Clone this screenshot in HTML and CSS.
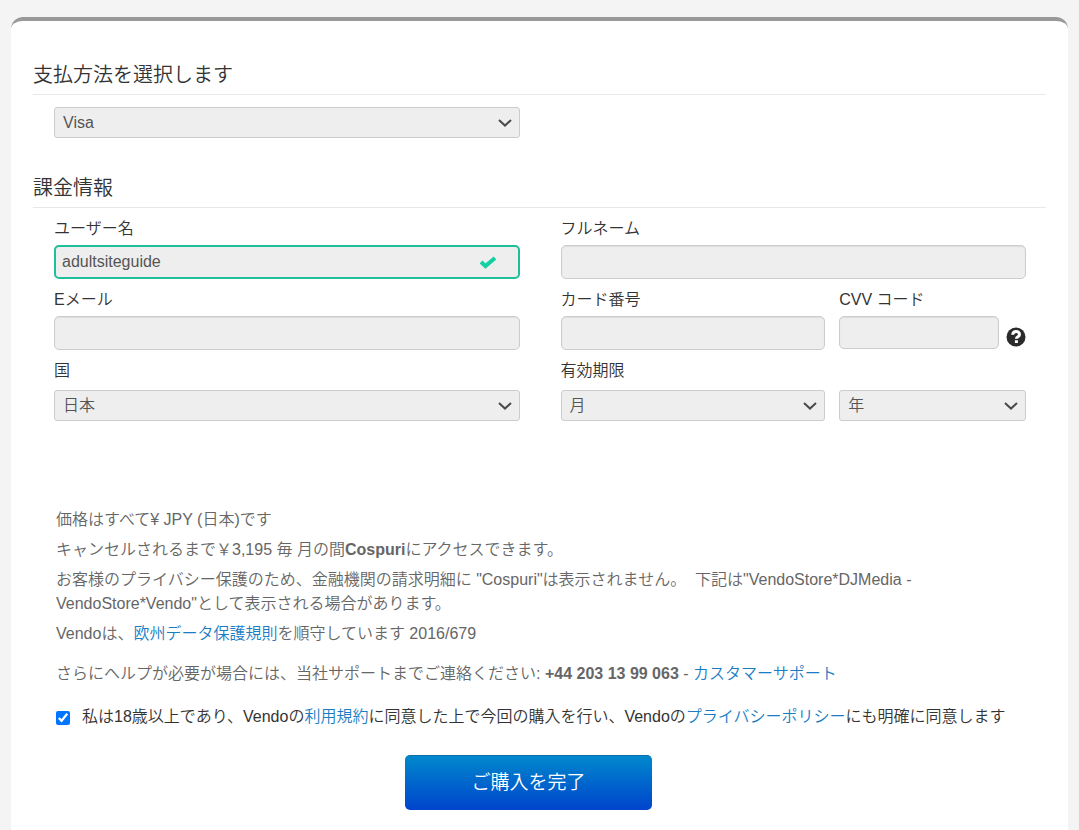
FILE: index.html
```html
<!DOCTYPE html>
<html lang="ja">
<head>
<meta charset="utf-8">
<meta name="viewport" content="width=device-width, initial-scale=1">
<title>お支払い</title>
<link rel="stylesheet" href="styles.css">
</head>
<body>
<form class="card">
  <section class="section">
    <h2 class="section-title" id="method-title">支払方法を選択します</h2>
    <div class="section-body columns">
      <div class="select-wrap">
        <select class="control select" aria-labelledby="method-title"><option>Visa</option></select>
        <svg class="chevron" viewBox="0 0 14 8" aria-hidden="true"><path d="M1 1l6 5.6 6-5.6"/></svg>
      </div>
    </div>
  </section>

  <section class="section billing">
    <h2 class="section-title">課金情報</h2>
    <div class="section-body columns">
      <div class="field">
        <label for="username">ユーザー名</label>
        <div class="valid-wrap">
          <input class="control valid" id="username" type="text" value="adultsiteguide">
          <svg class="check" viewBox="0 0 18 14" aria-hidden="true"><path d="M2 7l4.5 4 9.5-8"/></svg>
        </div>
      </div>
      <div class="field">
        <label for="fullname">フルネーム</label>
        <input class="control" id="fullname" type="text">
      </div>
      <div class="field">
        <label for="email">Eメール</label>
        <input class="control" id="email" type="email">
      </div>
      <div class="pair">
        <div class="field">
          <label for="card">カード番号</label>
          <input class="control" id="card" type="text">
        </div>
        <div class="field">
          <label for="cvv">CVV コード</label>
          <div class="cvv-row">
            <input class="control" id="cvv" type="text">
            <button class="help" type="button" aria-label="CVV">
              <svg viewBox="0 0 20 20" aria-hidden="true"><circle cx="10" cy="10" r="9.5"/><path d="M6.7 7.7c.2-4.2 6.8-4.2 6.8-.3 0 2.3-3.1 2.3-3.1 4.3"/><rect x="8.9" y="13.2" width="3" height="2.8"/></svg>
            </button>
          </div>
        </div>
      </div>
      <div class="field choice">
        <label for="country">国</label>
        <div class="select-wrap">
          <select class="control select" id="country"><option>日本</option></select>
          <svg class="chevron" viewBox="0 0 14 8" aria-hidden="true"><path d="M1 1l6 5.6 6-5.6"/></svg>
        </div>
      </div>
      <div class="pair">
        <div class="field choice">
          <label for="month">有効期限</label>
          <div class="select-wrap">
            <select class="control select" id="month"><option>月</option></select>
            <svg class="chevron" viewBox="0 0 14 8" aria-hidden="true"><path d="M1 1l6 5.6 6-5.6"/></svg>
          </div>
        </div>
        <div class="select-wrap year">
          <select class="control select" aria-label="年"><option>年</option></select>
          <svg class="chevron" viewBox="0 0 14 8" aria-hidden="true"><path d="M1 1l6 5.6 6-5.6"/></svg>
        </div>
      </div>
    </div>
  </section>

  <section class="terms">
    <p>価格はすべて¥ JPY (日本)です</p>
    <p>キャンセルされるまで￥3,195 毎 月の間<strong>Cospuri</strong>にアクセスできます。</p>
    <p>お客様のプライバシー保護のため、金融機関の請求明細に "Cospuri"は表示されません。&nbsp; 下記は"VendoStore*DJMedia - VendoStore*Vendo"として表示される場合があります。</p>
    <p>Vendoは、<a href="#">欧州データ保護規則</a>を順守しています 2016/679</p>
    <p class="support">さらにヘルプが必要が場合には、当社サポートまでご連絡ください: <strong>+44 203 13 99 063</strong> - <a href="#">カスタマーサポート</a></p>
    <div class="agree">
      <input type="checkbox" id="agree" checked>
      <label for="agree">私は18歳以上であり、Vendoの<a href="#">利用規約</a>に同意した上で今回の購入を行い、Vendoの<a href="#">プライバシーポリシー</a>にも明確に同意します</label>
    </div>
  </section>
  <button class="submit" type="submit">ご購入を完了</button>
</form>
</body>
</html>
```
FILE: styles.css
```css
* { box-sizing: border-box; }

body {
  margin: 0;
  padding: 17px 11px 0;
  background: #f4f4f4;
  color: #333;
  font-family: "Liberation Sans", "Noto Sans CJK JP", sans-serif;
  font-size: 16px;
  font-weight: 350;
  line-height: 24px;
}

.card {
  display: flex;
  flex-direction: column;
  min-height: calc(100vh - 17px);
  padding: 38px 22px 20px;
  background: #fff;
  border-top: 4px solid #999;
  border-radius: 12px 12px 0 0;
}

.section-title {
  margin: 0;
  padding-bottom: 3px;
  border-bottom: 1px solid #e8e8e8;
  font-size: 20px;
  font-weight: 350;
  line-height: 32px;
}

.section-body { padding: 12px 20px 0 21px; }

.columns {
  display: grid;
  grid-template-columns: 1fr 1fr;
  column-gap: 41px;
  row-gap: 8px;
}

.billing { margin-top: 34px; }
.billing .section-body { padding-top: 9px; }

.pair {
  display: grid;
  grid-template-columns: 17fr 12fr;
  column-gap: 14px;
}

.field {
  display: flex;
  flex-direction: column;
  gap: 4px;
}

.columns .field { padding-bottom: 1px; }
.columns .choice { gap: 7px; padding-bottom: 0; }
.pair .field { padding-bottom: 0; }

.control {
  width: 100%;
  height: 34px;
  padding: 0 8px;
  border: 1px solid #ccc;
  border-radius: 5px;
  outline: 0;
  background: #eee;
  box-shadow: inset 0 1px 1px #ddd;
  color: #555;
  font: inherit;
}

.select {
  display: block;
  height: 31px;
  border-radius: 3px;
  box-shadow: none;
  appearance: none;
}

.valid {
  display: block;
  padding: 0 6px;
  border: 2px solid #1fbf9c;
  box-shadow: none;
}

.valid-wrap,
.select-wrap { position: relative; }

.year { align-self: end; }

.chevron {
  position: absolute;
  top: 12px;
  right: 8px;
  width: 14px;
  height: 8px;
  fill: none;
  stroke: #4a4a4a;
  stroke-width: 2;
  pointer-events: none;
}

.check {
  position: absolute;
  top: 10px;
  right: 23px;
  width: 18px;
  height: 14px;
  fill: none;
  stroke: #12cfa4;
  stroke-width: 4;
}

.cvv-row {
  display: flex;
  align-items: flex-end;
  gap: 7px;
}

.cvv-row .control {
  flex: 1;
  min-width: 0;
  height: 33px;
}

.help {
  width: 20px;
  height: 22px;
  padding: 0 0 2px;
  border: 0;
  background: none;
  line-height: 0;
}

.help svg { width: 20px; height: 20px; }
.help circle { fill: #2b2b2b; }
.help path { fill: none; stroke: #fff; stroke-width: 3; }
.help rect { fill: #fff; }

.terms {
  display: flex;
  flex-direction: column;
  gap: 6px;
  margin-top: 87px;
  padding: 0 22px 0 23px;
  color: #666;
}

.terms p { margin: 0; }
.terms strong { font-weight: 700; }
.terms .support { margin-top: 10px; }
.terms a { color: #1a7dc4; text-decoration: none; }

.agree {
  display: flex;
  align-items: center;
  gap: 12px;
  margin-top: 13px;
  color: #333;
}

.agree input {
  flex: none;
  width: 14px;
  height: 14px;
  margin: 2px 0 0;
  accent-color: #0075ff;
}

.submit {
  align-self: center;
  width: 247px;
  height: 55px;
  margin: 26px 22px 0 0;
  border: 0;
  border-top: 1px solid #0a6fa8;
  border-radius: 5px;
  background: linear-gradient(#0088cc, #0044cc);
  color: #fff;
  font: inherit;
  font-size: 19px;
}
```
